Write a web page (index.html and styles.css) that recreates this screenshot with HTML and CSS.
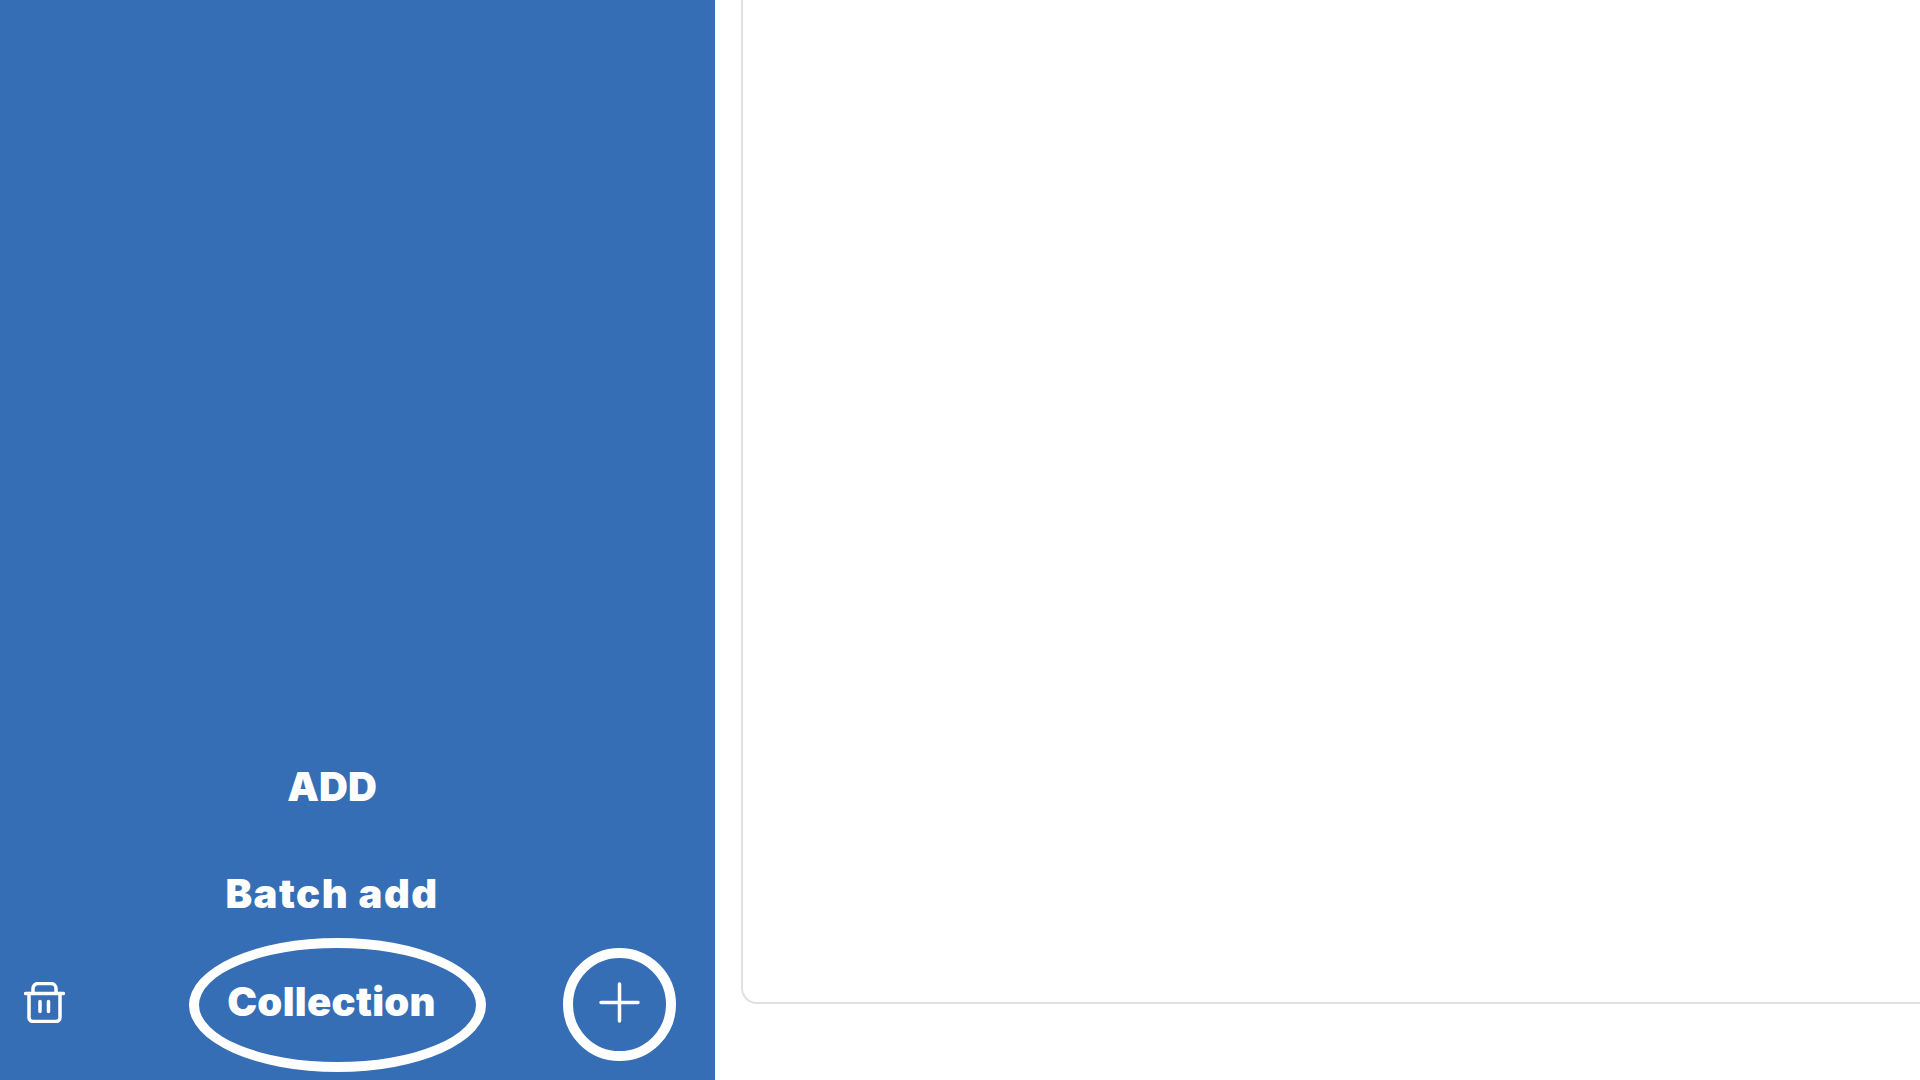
FILE: index.html
```html
<!DOCTYPE html>
<html lang="en">
  <head>
    <meta charset="UTF-8" />
    <meta name="viewport" content="width=device-width, initial-scale=1.0" />
    <title>Collection</title>
    <link rel="stylesheet" href="styles.css">
  </head>
  <body>
    <div class="page">
      <div class="sidebar">
        <div class="menu">
          <div class="menu-item menu-item-caps">ADD</div>
          <div class="menu-item">Batch add</div>
        </div>
        <div class="actions">
          <svg class="trash" width="41" height="41" viewBox="0 0 41 41" fill="none" stroke="#fff" stroke-width="3.5" stroke-linecap="round" stroke-linejoin="round">
            <path d="M1.5 11.5h38" />
            <path d="M5 11.5v24a4 4 0 0 0 4 4h23a4 4 0 0 0 4-4v-24" />
            <path d="M9 11.5v-5a5 5 0 0 1 5-5h13a5 5 0 0 1 5 5v5" />
            <path d="M16 19.5v10M24.5 19.5v10" />
          </svg>
          <div class="collection">Collection</div>
          <div class="add-btn">
            <svg width="41" height="41" viewBox="0 0 41 41" fill="none" stroke="#fff" stroke-width="3.5" stroke-linecap="round">
              <path d="M20.5 2v37M2 20.5h37" />
            </svg>
          </div>
        </div>
      </div>
      <div class="main">
        <div class="card"></div>
      </div>
    </div>
  </body>
</html>
```

FILE: styles.css
```css
html,
body {
  margin: 0;
  padding: 0;
  height: 100%;
  overflow: hidden;
  background-color: #fff;
}
body {
  font-family: Inter, "Liberation Sans", sans-serif;
}
.page {
  display: flex;
  height: 1080px;
}
.sidebar {
  width: 715px;
  flex-shrink: 0;
  box-sizing: border-box;
  background-color: #356eb5;
  color: #fff;
  display: flex;
  flex-direction: column;
  justify-content: flex-end;
  padding-bottom: 8px;
}
.menu {
  width: 664px;
  text-align: center;
  margin-bottom: 14px;
}
.menu-item {
  font-size: 40px;
  font-weight: 900;
  line-height: 60px;
  letter-spacing: 1.5px;
  margin-top: 47px;
}
.menu-item-caps {
  letter-spacing: 0;
}
.actions {
  display: flex;
  align-items: center;
  padding-left: 24px;
}
.trash {
  margin-top: -5px;
  margin-right: 124px;
}
.collection {
  width: 297px;
  height: 134px;
  box-sizing: border-box;
  border: 10px solid #fff;
  border-radius: 50%;
  display: flex;
  align-items: center;
  justify-content: center;
  padding: 0 12px 7px 0;
  font-size: 40px;
  font-weight: 900;
  letter-spacing: 0.3px;
  margin-right: 77px;
}
.add-btn {
  width: 113px;
  height: 113px;
  box-sizing: border-box;
  border: 10px solid #fff;
  border-radius: 50%;
  margin-top: -1px;
  display: flex;
  align-items: center;
  justify-content: center;
  padding-bottom: 4px;
}
.main {
  flex: 1;
  box-sizing: border-box;
  padding: 0 0 76px 26px;
}
.card {
  height: 100%;
  box-sizing: border-box;
  border-left: 2px solid #e0e0e3;
  border-bottom: 2px solid #e0e0e3;
  border-bottom-left-radius: 16px;
  background-color: #fff;
}
```
